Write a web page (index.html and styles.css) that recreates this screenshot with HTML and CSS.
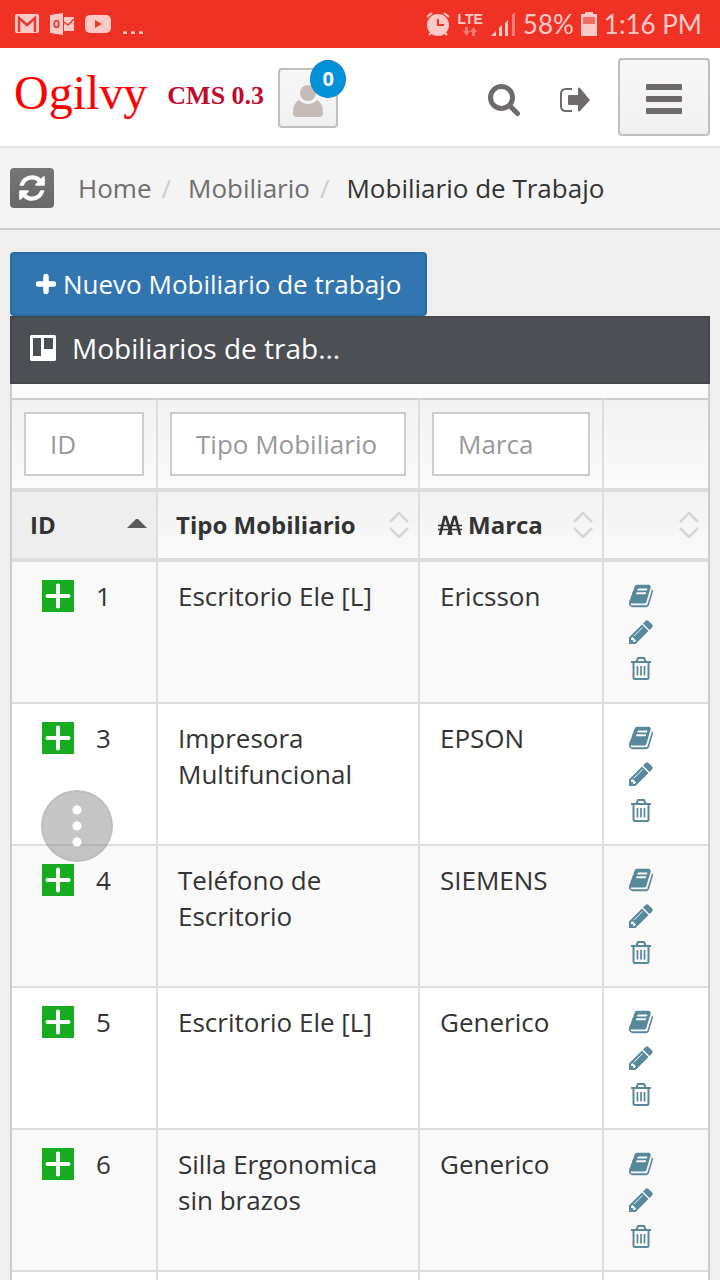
FILE: index.html
```
<!doctype html>

<html lang="es">
<head>
  <meta charset="utf-8">
  <meta name="viewport" content="width=device-width">

  <title>Mobiliario de Trabajo</title>

  <link rel="stylesheet" href="styles.css">
</head>

<body>
  <svg class="sprite" aria-hidden="true">
    <symbol id="book" viewBox="0 0 1792 1792">
      <path d="M1703 478q40 57 18 129l-275 906q-19 64-76.5 107.5t-122.5 43.5h-923q-77 0-148.5-53.5t-99.5-131.5q-24-67-2-127 0-4 3-27t4-37q1-8-3-21.5t-3-19.5q2-11 8-21t16.5-23.5 16.5-23.5q23-38 45-91.5t30-91.5q3-10 .5-30t-.5-28q3-11 17-28t17-23q21-36 42-92t25-90q1-9-2.5-32t.5-28q4-13 22-30.5t22-22.5q19-26 42.5-84.5t27.5-96.5q1-8-3-25.5t-2-26.5q2-8 9-18t18-23 17-21q8-12 16.5-30.5t15-35 16-36 19.5-32 26.5-23.5 36-11.5 47.5 5.5l-1 3q38-9 51-9h761q74 0 114 56t18 130l-274 906q-36 119-71.5 153.5t-128.5 34.5h-869q-27 0-38 15-11 16-1 43 24 70 144 70h923q29 0 56-15.5t35-41.5l300-987q7-22 5-57 38 15 59 43zm-1064 2q-4 13 2 22.5t20 9.5h608q13 0 25.5-9.5t16.5-22.5l21-64q4-13-2-22.5t-20-9.5h-608q-13 0-25.5 9.5t-16.5 22.5zm-83 256q-4 13 2 22.5t20 9.5h608q13 0 25.5-9.5t16.5-22.5l21-64q4-13-2-22.5t-20-9.5h-608q-13 0-25.5 9.5t-16.5 22.5z"/>
    </symbol>
    <symbol id="pencil" viewBox="0 0 1792 1792">
      <path d="M491 1536l91-91-235-235-91 91v107h128v128h107zm523-928q0-22-22-22-10 0-17 7l-542 542q-7 7-7 17 0 22 22 22 10 0 17-7l542-542q7-7 7-17zm-54-192l416 416-832 832h-416v-416zm683 96q0 53-37 90l-166 166-416-416 166-165q36-38 90-38 53 0 91 38l235 234q37 39 37 91z"/>
    </symbol>
    <symbol id="trash" viewBox="0 0 28 28">
      <path d="M4 8h20M9.5 7.500l1.500-3.500h6l1.500 3.500M6.500 8v15.500q0 1.500 1.500 1.500h12q1.500 0 1.500-1.500V8" fill="none" stroke="currentColor" stroke-width="2"/>
      <path d="M10.500 12v9.500M14 12v9.500M17.500 12v9.500" fill="none" stroke="currentColor" stroke-width="1.700"/>
    </symbol>
    <symbol id="sort" viewBox="0 0 20 28">
      <path d="M1 11l9-9 9 9M1 17l9 9 9-9" fill="none" stroke="#d6d6d6" stroke-width="2.500"/>
    </symbol>
    <symbol id="plus" viewBox="0 0 32 32">
      <path d="M0 0h32v32H0z" fill="#17ab20"/>
      <path d="M16 5.500v21M5.500 16h21" stroke="#fff" stroke-width="4" stroke-linecap="round"/>
    </symbol>
  </svg>

  <div class="status-bar">
    <svg width="24" height="20" viewBox="0 0 24 20">
      <rect width="24" height="19" rx="2" fill="#fccbc8"/>
      <path d="M4 18V4l8 7 8-7v14" fill="none" stroke="#e53b31" stroke-width="2.500"/>
    </svg>
    <svg width="24" height="22" viewBox="0 0 24 22">
      <path d="M0 2l13-2v22L0 20zM14 4h10v14H14z" fill="#fccbc8"/>
      <ellipse cx="6.500" cy="11" rx="2.300" ry="3.300" fill="none" stroke="#e53b31" stroke-width="1.800"/>
      <path d="M14 9l4 3 6-6" fill="none" stroke="#e53b31" stroke-width="1.500"/>
    </svg>
    <svg width="26" height="18" viewBox="0 0 26 18">
      <rect width="26" height="18" rx="5" fill="#fccbc8"/>
      <path d="M10 5l7 4-7 4z" fill="#e53b31"/>
    </svg>
    <svg width="22" height="20" viewBox="0 0 22 20" fill="#fccbc8">
      <circle cx="3" cy="19" r="2"/><circle cx="11" cy="19" r="2"/><circle cx="19" cy="19" r="2"/>
    </svg>
    <div class="status-right">
      <svg width="24" height="24" viewBox="0 0 24 24">
        <circle cx="12" cy="13" r="11" fill="#fccbc8"/>
        <path d="M1 5l5-4M23 5l-5-4M3 23l3-3M21 23l-3-3" stroke="#fccbc8" stroke-width="2"/>
        <path d="M12 7v6h6" fill="none" stroke="#f03224" stroke-width="2"/>
      </svg>
      <div class="network">
        <span>LTE</span>
        <svg width="14" height="9" viewBox="0 0 14 9" fill="#f77d74">
          <path d="M2 0h3v4h2L3.500 9 0 4h2zM9 9h3V5h2l-3.500-5L7 5h2z"/>
        </svg>
      </div>
      <svg width="26" height="24" viewBox="0 0 26 24" fill="#fccbc8">
        <path d="M1 24l5-5v5zM9 16l3-3v11H9zM15 11l3-3v16h-3z"/>
        <path d="M22 3l3-3v24h-3z" fill="#f77d74"/>
      </svg>
      <span>58%</span>
      <svg width="16" height="24" viewBox="0 0 16 24">
        <path d="M4 0h8v2h4v22H0V2h4z" fill="#fccbc8"/>
        <path d="M2 5h12v7H2z" fill="#f46c62"/>
      </svg>
      <span>1:16 PM</span>
    </div>
  </div>

  <div class="header">
    <a class="logo" href="#">Ogilvy</a>
    <span class="version">CMS 0.3</span>
    <button class="user" type="button" aria-label="Usuario">
      <svg width="32" height="34" viewBox="0 0 32 34" fill="#c5bbb7">
        <circle cx="16" cy="9" r="8"/>
        <path d="M7 16q4 4 9 4t9-4q6 3 6 13 0 4-4 4H5q-4 0-4-4 0-10 6-13z"/>
      </svg>
      <span class="badge">0</span>
    </button>
    <div class="header-actions">
      <button class="plain" type="button" aria-label="Buscar">
        <svg width="32" height="32" viewBox="0 0 32 32" fill="none" stroke="#6e6a69">
          <circle cx="13.500" cy="13.500" r="11" stroke-width="5"/>
          <path d="M22 22l7.500 7.500" stroke-width="5" stroke-linecap="round"/>
        </svg>
      </button>
      <a class="plain" href="#" aria-label="Salir">
        <svg width="30" height="26" viewBox="0 0 30 26">
          <path d="M12 2H6Q1 2 1 7v12q0 5 5 5h6" fill="none" stroke="#6e6a69" stroke-width="2"/>
          <path d="M9 8h9V1q1-1 2 0l10 12-10 11q-1 1-2 0v-6H9q-1 0-1-1V9q0-1 1-1z" fill="#6e6a69"/>
        </svg>
      </a>
      <button class="menu" type="button" aria-label="Menú">
        <svg width="36" height="30" viewBox="0 0 36 30" fill="#6e6a69">
          <rect width="36" height="6" rx="1"/><rect y="12" width="36" height="6" rx="1"/><rect y="24" width="36" height="6" rx="1"/>
        </svg>
      </button>
    </div>
  </div>

  <div class="ribbon">
    <button class="refresh" type="button" aria-label="Actualizar">
      <svg width="30" height="30" viewBox="0 0 1792 1792" fill="#fff">
        <path d="M1639 1056q0 5-1 7-64 268-268 434.5t-478 166.5q-146 0-282.5-55t-243.5-157l-129 129q-19 19-45 19t-45-19-19-45v-448q0-26 19-45t45-19h448q26 0 45 19t19 45-19 45l-137 137q71 66 161 102t187 36q134 0 250-65t186-179q11-17 53-117 8-23 30-23h192q13 0 22.5 9.5t9.5 22.5zm25-800v448q0 26-19 45t-45 19h-448q-26 0-45-19t-19-45 19-45l138-138q-148-137-349-137-134 0-250 65t-186 179q-11 17-53 117-8 23-30 23h-199q-13 0-22.5-9.5t-9.5-22.5v-7q65-268 270-434.5t480-166.5q146 0 284 55.5t245 156.5l130-129q19-19 45-19t45 19 19 45z"/>
      </svg>
    </button>
    <ol class="breadcrumb">
      <li><a href="#">Home</a></li>
      <li><a href="#">Mobiliario</a></li>
      <li class="active">Mobiliario de Trabajo</li>
    </ol>
  </div>

  <div class="content">
    <button class="new" type="button">
      <svg width="20" height="20" viewBox="0 0 20 20">
        <path d="M10 2.500v15M2.500 10h15" stroke="#fff" stroke-width="5.500" stroke-linecap="round"/>
      </svg>
      Nuevo Mobiliario de trabajo
    </button>

    <div class="widget">
      <div class="widget-header">
        <svg width="26" height="26" viewBox="0 0 26 26">
          <path d="M1 0h24l1 1v24l-1 1H1l-1-1V1zM3 3v18h8V3zM14 3v11h9V3z" fill="#fff" fill-rule="evenodd"/>
        </svg>
        <h2>Mobiliarios de trab...</h2>
      </div>

      <div class="widget-body">
        <table class="items">
          <colgroup>
            <col class="col-id">
            <col>
            <col class="col-brand">
            <col class="col-actions">
          </colgroup>
          <thead>
            <tr class="filters">
              <td><input type="text" placeholder="ID" aria-label="ID"></td>
              <td><input type="text" placeholder="Tipo Mobiliario" aria-label="Tipo Mobiliario"></td>
              <td><input type="text" placeholder="Marca" aria-label="Marca"></td>
              <td></td>
            </tr>
            <tr class="titles">
              <th class="sorted" aria-sort="ascending">
                <button type="button">ID
                  <svg width="20" height="28" viewBox="0 0 20 28"><path d="M0 17L9 8h2l9 9z" fill="#5a5a5a"/></svg>
                </button>
              </th>
              <th>
                <button type="button">Tipo Mobiliario <svg width="20" height="28"><use href="#sort"/></svg></button>
              </th>
              <th>
                <button type="button">
                  <svg class="brand-icon" width="24" height="20" viewBox="0 0 24 20" fill="none" stroke="#333">
                    <path d="M2 20L6.500 2h1.500L13.500 20M10.500 20L16 2h1.500L22 20" stroke-width="2.600"/>
                    <path d="M0 10.500h24M0 14.500h24" stroke-width="1.500"/>
                  </svg>
                  Marca <svg width="20" height="28"><use href="#sort"/></svg>
                </button>
              </th>
              <th>
                <button type="button" aria-label="Ordenar"><svg width="20" height="28"><use href="#sort"/></svg></button>
              </th>
            </tr>
          </thead>
          <tbody>
            <tr>
              <td><button class="expand" type="button" aria-label="Detalle"><svg width="32" height="32"><use href="#plus"/></svg></button>1</td>
              <td>Escritorio Ele [L]</td>
              <td>Ericsson</td>
              <td class="actions">
                <a href="#" aria-label="Ver"><svg width="26" height="26"><use href="#book"/></svg></a>
                <a href="#" aria-label="Editar"><svg width="28" height="28"><use href="#pencil"/></svg></a>
                <a href="#" aria-label="Eliminar"><svg width="28" height="28"><use href="#trash"/></svg></a>
              </td>
            </tr>
            <tr>
              <td><button class="expand" type="button" aria-label="Detalle"><svg width="32" height="32"><use href="#plus"/></svg></button>3</td>
              <td>Impresora Multifuncional</td>
              <td>EPSON</td>
              <td class="actions">
                <a href="#" aria-label="Ver"><svg width="26" height="26"><use href="#book"/></svg></a>
                <a href="#" aria-label="Editar"><svg width="28" height="28"><use href="#pencil"/></svg></a>
                <a href="#" aria-label="Eliminar"><svg width="28" height="28"><use href="#trash"/></svg></a>
              </td>
            </tr>
            <tr>
              <td><button class="expand" type="button" aria-label="Detalle"><svg width="32" height="32"><use href="#plus"/></svg></button>4</td>
              <td>Teléfono de Escritorio</td>
              <td>SIEMENS</td>
              <td class="actions">
                <a href="#" aria-label="Ver"><svg width="26" height="26"><use href="#book"/></svg></a>
                <a href="#" aria-label="Editar"><svg width="28" height="28"><use href="#pencil"/></svg></a>
                <a href="#" aria-label="Eliminar"><svg width="28" height="28"><use href="#trash"/></svg></a>
              </td>
            </tr>
            <tr>
              <td><button class="expand" type="button" aria-label="Detalle"><svg width="32" height="32"><use href="#plus"/></svg></button>5</td>
              <td>Escritorio Ele [L]</td>
              <td>Generico</td>
              <td class="actions">
                <a href="#" aria-label="Ver"><svg width="26" height="26"><use href="#book"/></svg></a>
                <a href="#" aria-label="Editar"><svg width="28" height="28"><use href="#pencil"/></svg></a>
                <a href="#" aria-label="Eliminar"><svg width="28" height="28"><use href="#trash"/></svg></a>
              </td>
            </tr>
            <tr>
              <td><button class="expand" type="button" aria-label="Detalle"><svg width="32" height="32"><use href="#plus"/></svg></button>6</td>
              <td>Silla Ergonomica sin brazos</td>
              <td>Generico</td>
              <td class="actions">
                <a href="#" aria-label="Ver"><svg width="26" height="26"><use href="#book"/></svg></a>
                <a href="#" aria-label="Editar"><svg width="28" height="28"><use href="#pencil"/></svg></a>
                <a href="#" aria-label="Eliminar"><svg width="28" height="28"><use href="#trash"/></svg></a>
              </td>
            </tr>
            <tr>
              <td></td>
              <td></td>
              <td></td>
              <td></td>
            </tr>
          </tbody>
        </table>
      </div>
    </div>
  </div>

  <button class="floating" type="button" aria-label="Más opciones">
    <svg width="10" height="42" viewBox="0 0 10 42" fill="#fff">
      <circle cx="5" cy="5" r="4.500"/><circle cx="5" cy="21" r="4.500"/><circle cx="5" cy="37" r="4.500"/>
    </svg>
  </button>
</body>
</html>
```
FILE: styles.css
```
* {
  box-sizing: border-box;
}

body {
  margin: 0;
  height: 100vh;
  overflow: hidden;
  font-family: 'Open Sans', 'Noto Sans', sans-serif;
  font-size: 26px;
  line-height: 36px;
  background: #efefef;
  color: #333;
}

svg {
  display: block;
  flex: none;
}

button {
  padding: 0;
  font: inherit;
  color: inherit;
  border: none;
  background: none;
}

.sprite {
  position: absolute;
  width: 0;
  height: 0;
}

.status-bar {
  display: flex;
  align-items: center;
  gap: 11px;
  height: 48px;
  padding: 0 18px 0 15px;
  background: #f03224;
  color: #fccbc8;
}

.status-right {
  display: flex;
  align-items: center;
  gap: 7px;
  margin-left: auto;
  font-family: 'Lato', sans-serif;
  white-space: nowrap;
}

.network {
  display: flex;
  flex-direction: column;
  align-items: center;
  font-family: 'Liberation Sans', sans-serif;
  font-size: 14px;
  font-weight: bold;
  line-height: 15px;
}

.header {
  display: flex;
  align-items: center;
  height: 100px;
  padding: 0 10px 0 14px;
  border-bottom: 2px solid #e5e5e5;
  background: #fff;
}

.logo {
  padding-bottom: 8px;
  font-family: 'Liberation Serif', serif;
  font-size: 48px;
  line-height: 60px;
  color: #f00;
  text-decoration: none;
}

.version {
  margin-left: 20px;
  padding-bottom: 2px;
  font-family: 'Liberation Serif', serif;
  font-weight: bold;
  color: #c10a2c;
  white-space: nowrap;
}

.user {
  position: relative;
  display: flex;
  justify-content: center;
  align-items: flex-end;
  width: 60px;
  height: 60px;
  margin: 2px 0 0 14px;
  padding-bottom: 8px;
}

.user,
.menu {
  border: 2px solid #bfbfbf;
  border-radius: 4px;
  background: linear-gradient(#f8f8f8, #f0f0f0);
}

.badge {
  position: absolute;
  top: -10px;
  right: -10px;
  width: 36px;
  height: 38px;
  border: 1px solid #0b82c4;
  border-radius: 50%;
  background: #0091d9;
  color: #fff;
  font-size: 20px;
  font-weight: bold;
  text-align: center;
}

.header-actions {
  display: flex;
  align-items: center;
  margin-left: auto;
}

.plain {
  margin-right: 40px;
  padding-top: 6px;
}

.plain + .menu {
  margin-left: -12px;
}

.menu {
  display: flex;
  justify-content: center;
  align-items: center;
  width: 92px;
  height: 78px;
  padding-top: 4px;
}

.ribbon {
  display: flex;
  align-items: center;
  gap: 24px;
  height: 82px;
  padding: 0 10px;
  border-bottom: 2px solid #ccc;
  background: #f4f4f4;
}

.refresh {
  display: flex;
  justify-content: center;
  align-items: center;
  width: 44px;
  height: 40px;
  border-radius: 4px;
  background: linear-gradient(#757575, #686868);
}

.breadcrumb {
  display: flex;
  margin: 0;
  padding: 0;
  list-style: none;
  white-space: nowrap;
}

.breadcrumb a {
  color: #6e6e6e;
  text-decoration: none;
}

.breadcrumb li + li:before {
  content: '/';
  padding: 0 17px 0 10px;
  color: #ccc;
}

.content {
  padding: 22px 10px 0;
}

.new {
  display: flex;
  align-items: center;
  gap: 7px;
  height: 64px;
  padding: 0 24px;
  border: 2px solid #2a6ba3;
  border-radius: 4px;
  background: #3276b1;
  color: #fff;
}

.widget-header {
  display: flex;
  align-items: center;
  gap: 16px;
  height: 68px;
  padding: 0 18px 4px;
  border: 2px solid #45474b;
  background: #4c4f53;
  color: #fff;
}

.widget-header h2 {
  margin: 0;
  font-size: 28px;
  font-weight: normal;
}

.widget-body {
  padding-top: 14px;
  border: 2px solid #ccc;
  border-top: none;
  background: #fafafa;
}

.items {
  width: 100%;
  table-layout: fixed;
  border-spacing: 0;
}

.col-id {
  width: 146px;
}

.col-brand {
  width: 184px;
}

.col-actions {
  width: 104px;
}

.items td,
.items th {
  border-right: 2px solid #ddd;
  text-align: left;
  vertical-align: top;
}

.items td:last-child,
.items th:last-child {
  border-right: none;
}

.items .filters td {
  height: 94px;
  padding: 12px;
  border-top: 2px solid #ccc;
  border-bottom: 4px solid #ddd;
  background: linear-gradient(#f2f2f2, #fafafa);
}

.filters input {
  display: block;
  width: 100%;
  height: 64px;
  padding: 0 24px;
  border: 2px solid #ccc;
  border-radius: 0;
  background: #fff;
  font: inherit;
}

.filters input::placeholder {
  color: #999;
}

.titles th {
  height: 70px;
  padding: 0 9px 0 18px;
  border-bottom: 4px solid #ddd;
  background: linear-gradient(#f2f2f2, #fafafa);
}

.titles th.sorted {
  background: #eee;
}

.titles button {
  display: flex;
  align-items: center;
  width: 100%;
  height: 66px;
  font-size: 24px;
  font-weight: bold;
  white-space: nowrap;
}

.titles button svg:last-child {
  margin-left: auto;
}

.titles .brand-icon {
  margin-right: 6px;
}

.items tbody td {
  height: 142px;
  padding: 16px 20px;
  border-bottom: 2px solid #ddd;
  background: #fff;
}

.items tbody tr:nth-child(odd) td {
  background: #f9f9f9;
}

.items tbody td:first-child {
  padding-left: 30px;
}

.expand {
  float: left;
  margin: 2px 22px 0 0;
}

.actions a {
  display: flex;
  align-items: center;
  justify-content: center;
  width: 34px;
  height: 36px;
  color: #57889c;
}

.actions svg {
  fill: currentColor;
}

.floating {
  position: fixed;
  left: 41px;
  top: 790px;
  display: flex;
  justify-content: center;
  align-items: center;
  width: 72px;
  height: 72px;
  border: 2px solid rgba(120, 120, 120, 0.1);
  border-radius: 50%;
  background: rgba(135, 135, 135, 0.48);
}
```
